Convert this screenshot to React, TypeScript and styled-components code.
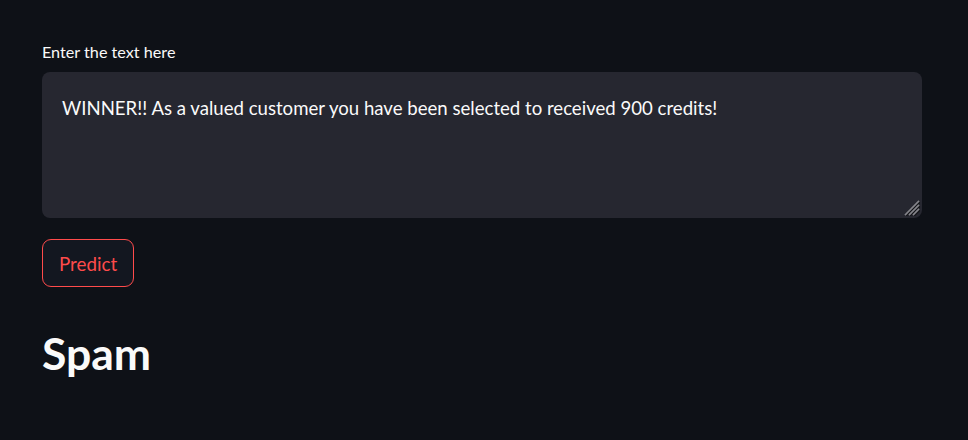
import React from "react";
import styled, { createGlobalStyle } from "styled-components";

const Global = createGlobalStyle`
  html, body { margin: 0; padding: 0; background: #0e1117; }
  body { font-family: "Lato", "Noto Sans", sans-serif; color: #fafafa; }
`;

const Page = styled.main`
  width: 968px;
  height: 440px;
  box-sizing: border-box;
  padding: 40px 46px 0 42px;
  background: #0e1117;
  display: flex;
  flex-direction: column;
`;

const Label = styled.label`
  font-size: 16.2px;
  line-height: 24px;
  color: #fafafa;
  margin-bottom: 8px;
`;

const Field = styled.div`
  position: relative;
  width: 880px;
  height: 146px;
`;

const TextArea = styled.textarea`
  box-sizing: border-box;
  width: 100%;
  height: 100%;
  display: block;
  background: #262730;
  border: none;
  border-radius: 8px;
  padding: 23px 20px;
  color: #fafafa;
  font-family: "Lato", "Noto Sans", sans-serif;
  font-size: 18.6px;
  line-height: 26px;
  resize: none;
  outline: none;
`;

const Grip = styled.svg`
  position: absolute;
  right: 2px;
  bottom: 2px;
  width: 16px;
  height: 16px;
  pointer-events: none;
`;

const Button = styled.button`
  align-self: flex-start;
  margin-top: 21px;
  box-sizing: border-box;
  height: 48px;
  padding: 0 16px;
  background: #131720;
  border: 1px solid #ff4b4b;
  border-radius: 9px;
  color: #ff4b4b;
  font-family: "Lato", "Noto Sans", sans-serif;
  font-size: 18.8px;
  cursor: pointer;
`;

const Heading = styled.h1`
  margin: 36px 0 0;
  font-family: "Lato", "Noto Sans", sans-serif;
  font-weight: 700;
  font-size: 44.5px;
  line-height: 60px;
  color: #fafafa;
`;

export default function App() {
  return (
    <>
      <Global />
      <Page>
        <Label>Enter the text here</Label>
        <Field>
          <TextArea defaultValue="WINNER!! As a valued customer you have been selected to received 900 credits!" />
          <Grip viewBox="0 0 16 16">
            <g strokeWidth="1.6" strokeLinecap="square">
              <path d="M2.5 15.5 L15.5 2.5" stroke="#141519" />
              <path d="M6.5 15.5 L15.5 6.5" stroke="#141519" />
              <path d="M10.5 15.5 L15.5 10.5" stroke="#141519" />
              <path d="M1.5 14.5 L14.5 1.5" stroke="#85858b" />
              <path d="M5.5 14.5 L14.5 5.5" stroke="#85858b" />
              <path d="M9.5 14.5 L14.5 9.5" stroke="#85858b" />
            </g>
          </Grip>
        </Field>
        <Button>Predict</Button>
        <Heading>Spam</Heading>
      </Page>
    </>
  );
}
